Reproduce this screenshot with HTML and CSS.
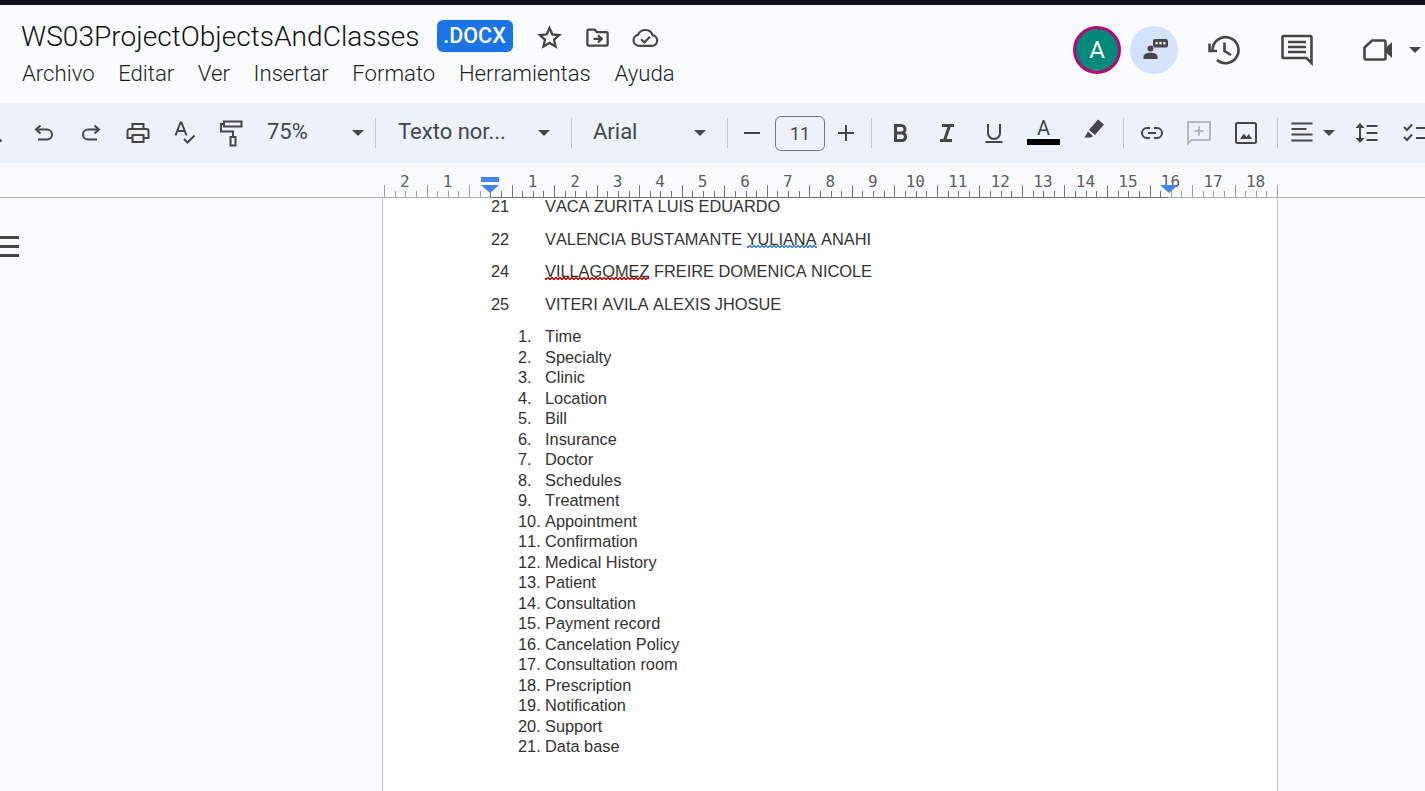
FILE: index.html
```html
<!DOCTYPE html>
<html lang="en">
<head>
    <meta charset="UTF-8">
    <title>WS03ProjectObjectsAndClasses</title>
    <link rel="stylesheet" href="styles.css">
</head>
<body>
    <div class="topline"></div>

    <header class="header">
        <div class="header-left">
            <div class="title-row">
                <span class="doc-title">WS03ProjectObjectsAndClasses</span>
                <span class="badge">.DOCX</span>
                <svg class="title-icon star" viewBox="0 0 24 24"><path class="ln" d="M12 3.600l2.500 5.600 6.100.6-4.600 4.100 1.400 6-5.400-3.100-5.400 3.100 1.400-6-4.600-4.100 6.100-.6z"/></svg>
                <svg class="title-icon folder" viewBox="0 0 24 24"><path class="ln" d="M3 18.200V6a1 1 0 0 1 1-1h5.500l2 2.200H20a1 1 0 0 1 1 1v10a1 1 0 0 1-1 1H4a1 1 0 0 1-1-1z"/><path class="ln" d="M8.500 13.200h7M12.500 10l3.200 3.200-3.200 3.200"/></svg>
                <svg class="title-icon cloud" viewBox="0 0 28 24"><path class="ln" d="M8 19.500a5 5 0 0 1-.8-9.900A7.200 7.200 0 0 1 20.600 10a4.800 4.800 0 0 1-.4 9.500z"/><path class="ln" d="M10 13.500l3 3 5-5.200"/></svg>
            </div>
            <nav class="menu">
                <span>Archivo</span>
                <span>Editar</span>
                <span>Ver</span>
                <span>Insertar</span>
                <span>Formato</span>
                <span>Herramientas</span>
                <span>Ayuda</span>
            </nav>
        </div>
        <div class="header-right">
            <div class="avatar">A</div>
            <div class="chat-btn">
                <svg viewBox="0 0 28 28" width="28" height="28"><circle cx="10.500" cy="12.500" r="3" fill="#444746"/><path d="M3.500 23v-2.500c0-2.500 3.500-3.800 7-3.800s7 1.300 7 3.800V23z" fill="#444746"/><rect x="13" y="3" width="15" height="8.500" rx="2" fill="#444746"/><rect x="15.500" y="6" width="2.200" height="2.400" fill="#fff"/><rect x="19.400" y="6" width="2.200" height="2.400" fill="#fff"/><rect x="23.300" y="6" width="2.200" height="2.400" fill="#fff"/></svg>
            </div>
            <svg class="head-icon history" viewBox="0 0 32 32"><path class="ln2" d="M4.500 16A13 13 0 1 1 9 26"/><path class="ln2" d="M1.500 9.500v7.500h7.500"/><path class="ln2" d="M16.500 8.500v8.500l6.500 4"/></svg>
            <svg class="head-icon comments" viewBox="0 0 32 32"><path class="ln2" d="M2.500 2h27a1 1 0 0 1 1 1v26l-5-5h-23a1 1 0 0 1-1-1V3a1 1 0 0 1 1-1z"/><path class="ln2" d="M7 8h18M7 13h18M7 18h18"/></svg>
            <svg class="head-icon meet" viewBox="0 0 32 32"><path class="ln2" d="M10 6.500h12a1.500 1.500 0 0 1 1.500 1.500v16a1.500 1.500 0 0 1-1.500 1.500H4a1.500 1.500 0 0 1-1.500-1.500V13.500z"/><path d="M24 13.500l6-5.500v16l-6-5.500z" fill="#444746"/></svg>
            <span class="caret meet-caret"></span>
        </div>
    </header>

    <div class="toolbar">
        <span class="tool search"><svg viewBox="0 0 24 24"><circle class="ln" cx="10" cy="10" r="6"/><path class="ln" d="M14.500 14.500l6 6"/></svg></span>
        <span class="tool"><svg viewBox="0 0 24 24"><path class="ln" d="M8.500 4.500l-4.500 4 4.500 4"/><path class="ln" d="M4 8.500h11a5 5 0 0 1 0 10H6"/></svg></span>
        <span class="tool"><svg viewBox="0 0 24 24"><path class="ln" d="M15.500 4.500l4.500 4-4.500 4"/><path class="ln" d="M20 8.500H9a5 5 0 0 0 0 10h9"/></svg></span>
        <span class="tool"><svg viewBox="0 0 24 24"><path class="ln" d="M6.500 8V3h11v5"/><path class="ln" d="M6.500 17H1.500v-7a2 2 0 0 1 2-2h17a2 2 0 0 1 2 2v7h-5"/><path class="ln" d="M6.500 14h11v7h-11z"/></svg></span>
        <span class="tool"><svg viewBox="0 0 24 24"><path class="ln" d="M2.500 14.500L7.500 1.500h1l5 13M4.500 10h7"/><path class="ln" d="M11 18l3.500 3.500 7-7"/></svg></span>
        <span class="tool"><svg class="tall" viewBox="0 0 24 27"><path class="ln" d="M4 1.500h17.500v5H4z"/><path class="ln" d="M4 4H1v7.500h12V16"/><path class="ln" d="M10.500 17h5v8.500h-5z"/></svg></span>
        <div class="select zoom-select"><span>75%</span><i class="caret"></i></div>
        <i class="sep"></i>
        <div class="select style-select"><span>Texto nor...</span><i class="caret"></i></div>
        <i class="sep"></i>
        <div class="select font-select"><span>Arial</span><i class="caret"></i></div>
        <i class="sep"></i>
        <span class="tool"><svg viewBox="0 0 24 24"><path class="ln" d="M4 12h16"/></svg></span>
        <span class="size-box">11</span>
        <span class="tool size-plus"><svg viewBox="0 0 24 24"><path class="ln" d="M4 12h16M12 4v16"/></svg></span>
        <i class="sep sep-format"></i>
        <span class="tool"><svg viewBox="0 0 24 24"><path class="ln3" d="M7.500 12h5.800a3.700 3.700 0 0 0 0-7.500H7.500v15h6.800a3.800 3.800 0 0 0 0-7.500"/></svg></span>
        <span class="tool"><svg viewBox="0 0 24 24"><path class="ln3" d="M7 4.500h12M5 19.500h12M14.500 4.500l-5 15"/></svg></span>
        <span class="tool"><svg viewBox="0 0 24 24"><path class="ln" d="M6 3v9a6 6 0 0 0 12 0V3M3.500 21h17"/></svg></span>
        <div class="color-tool">
            <span class="color-a">A</span>
            <i class="color-bar"></i>
        </div>
        <span class="tool"><svg viewBox="0 3 24 24"><path d="M16 1.500l6 5-9 10.500-6-5z" fill="#444746"/><path d="M6 13.500l5 4.500-2 1.500H2.500z" fill="#444746"/></svg></span>
        <i class="sep sep-insert"></i>
        <span class="tool"><svg viewBox="0 0 24 24"><path class="ln" d="M10 7H7a5 5 0 0 0 0 10h3M14 7h3a5 5 0 0 1 0 10h-3M8 12h8"/></svg></span>
        <span class="tool"><svg viewBox="0 0 24 24"><path class="ln muted" d="M1 1h22v18H4.500L1 22.500z"/><path class="ln muted" d="M12 5.500v9M7.500 10h9"/></svg></span>
        <span class="tool"><svg viewBox="0 0 24 24"><rect class="ln" x="2" y="2" width="20" height="20" rx="1.500"/><path d="M6 18l3.800-5.500 2.700 3.500 2.200-3 3.500 5z" fill="#444746"/></svg></span>
        <i class="sep sep-para"></i>
        <span class="tool align-btn"><svg viewBox="0 0 24 24"><path class="ln" d="M1.500 2.500h21M1.500 8h15M1.500 13.500h21M1.500 19.500h21"/></svg></span>
        <i class="caret align-caret"></i>
        <span class="tool"><svg viewBox="0 0 24 24"><path class="ln" d="M6 3v18"/><path d="M1.500 7L6 2l4.500 5zM1.500 17L6 22l4.500-5z" fill="#444746"/><path class="ln" d="M12.500 5h11M12.500 12h11M12.500 19h11"/></svg></span>
        <span class="tool check-tool"><svg viewBox="0 0 24 24"><path class="ln" d="M1 6l3 3 5-5.500M1 16l3 3 5-5.500M13 7h11M13 17h11"/></svg></span>
    </div>

    <div class="ruler">
        <svg class="ruler-svg" width="895" height="35" viewBox="0 0 895 35" id="rulerSvg"></svg>
        <i class="indent-bar"></i>
        <i class="marker marker-left"></i>
        <i class="marker marker-right"></i>
    </div>

    <main class="workspace">
        <div class="outline-btn"><i></i><i></i><i></i></div>
        <section class="page">
            <div class="rows">
                <div class="row"><span class="num">21</span><span>VACA ZURITA LUIS EDUARDO</span></div>
                <div class="row"><span class="num">22</span><span>VALENCIA BUSTAMANTE <span class="spell-blue">YULIANA</span> ANAHI</span></div>
                <div class="row"><span class="num">24</span><span><span class="spell-red">VILLAGOMEZ</span> FREIRE DOMENICA NICOLE</span></div>
                <div class="row"><span class="num">25</span><span>VITERI AVILA ALEXIS JHOSUE</span></div>
            </div>
            <ol class="classes">
                <li>Time</li>
                <li>Specialty</li>
                <li>Clinic</li>
                <li>Location</li>
                <li>Bill</li>
                <li>Insurance</li>
                <li>Doctor</li>
                <li>Schedules</li>
                <li>Treatment</li>
                <li>Appointment</li>
                <li>Confirmation</li>
                <li>Medical History</li>
                <li>Patient</li>
                <li>Consultation</li>
                <li>Payment record</li>
                <li>Cancelation Policy</li>
                <li>Consultation room</li>
                <li>Prescription</li>
                <li>Notification</li>
                <li>Support</li>
                <li>Data base</li>
            </ol>
        </section>
    </main>

    <script>
        // ruler ticks and numbers, 42.5px per cm, zero sits at x=490 on screen
        var svg = document.getElementById('rulerSvg');
        var originX = 384;
        var zero = 490 - originX;
        var cm = 42.53;
        var rightEnd = 1168 - originX;
        var out = '';
        var i;

        function tick(x, y1, color) {
            out += '<line x1="' + x + '" x2="' + x + '" y1="' + y1 + '" y2="34" stroke="' + color + '"/>';
        }

        for (i = 0; i <= 84; i++) {
            var x = Math.round(i * cm / 4) + 0.5;
            var inside = x >= zero && x <= rightEnd;
            tick(x, i % 4 === 0 ? 22 : 28, inside ? '#757575' : '#a0a0a0');
        }

        for (i = -2; i <= 18; i++) {
            if (i === 0) continue;
            out += '<text x="' + (zero + i * cm) + '" y="24">' + Math.abs(i) + '</text>';
        }
        svg.innerHTML = out;
    </script>
</body>
</html>
```

FILE: styles.css
```css
html, body {
    margin: 0;
    height: 100%;
    overflow: hidden;
}

body {
    background: #f9fbfd;
    font-family: Roboto, "Liberation Sans", sans-serif;
    color: #1f1f1f;
    display: flex;
    flex-direction: column;
}

svg {
    display: block;
}

.ln, .ln2, .ln3 {
    fill: none;
    stroke: #444746;
    stroke-width: 2;
}

.ln2 {
    stroke-width: 2.600;
}

.ln3 {
    stroke-width: 3;
}

.ln.muted {
    stroke: #b5b8bd;
}

.topline {
    height: 5px;
    background: #0f0f17;
    flex: none;
}

/* header */
.header {
    height: 98px;
    flex: none;
    display: flex;
    justify-content: space-between;
}

.header-left {
    padding: 15px 0 0 21px;
}

.title-row {
    display: flex;
    align-items: center;
    height: 32px;
}

.doc-title {
    font-size: 28.100px;
    font-weight: 300;
    color: #111;
}

.badge {
    margin-left: 17px;
    width: 76px;
    height: 32px;
    line-height: 32px;
    text-align: center;
    border-radius: 6px;
    background: #1a73e8;
    color: #fff;
    font-size: 21.500px;
    font-weight: 500;
}

.title-icon {
    width: 27px;
    height: 27px;
    margin-top: 3px;
}

.star {
    margin-left: 23px;
}

.folder {
    margin-left: 21px;
}

.cloud {
    width: 31px;
    margin-left: 19px;
}

.menu {
    display: flex;
    gap: 23.600px;
    margin: 8px 0 0 1px;
    font-size: 22.150px;
    font-weight: 300;
    line-height: 26px;
    color: #1f1f1f;
}

.header-right {
    display: flex;
    align-items: center;
    height: 48px;
    padding: 21px 4px 0 0;
}

.avatar {
    width: 48px;
    height: 48px;
    box-sizing: border-box;
    border: 3px solid #b80672;
    border-radius: 50%;
    background: #00897b;
    color: #fff;
    font-size: 24px;
    line-height: 42px;
    text-align: center;
}

.chat-btn {
    width: 48px;
    height: 48px;
    margin-left: 9px;
    border-radius: 50%;
    background: #d3e3fd;
    display: flex;
    align-items: center;
    justify-content: center;
}

.head-icon {
    width: 32px;
    height: 32px;
}

.history {
    margin-left: 30px;
}

.comments {
    margin-left: 41px;
}

.meet {
    margin-left: 49px;
}

.caret {
    display: block;
    width: 0;
    height: 0;
    border-left: 6px solid transparent;
    border-right: 6px solid transparent;
    border-top: 6px solid #444746;
    flex: none;
}

.meet-caret {
    margin-left: 15px;
}

/* toolbar */
.toolbar {
    height: 60px;
    flex: none;
    margin-left: -27px;
    display: flex;
    align-items: center;
    background: #edf2fa;
    white-space: nowrap;
}

.tool {
    width: 47px;
    flex: none;
    display: flex;
    justify-content: center;
}

.tool svg {
    width: 24px;
    height: 24px;
    overflow: visible;
}

.tool svg.tall {
    height: 27px;
}

.search svg {
    margin-right: 8px;
}

.select {
    display: flex;
    align-items: center;
    justify-content: space-between;
    flex: none;
    font-size: 22px;
    line-height: 26px;
    color: #444746;
    box-sizing: border-box;
    padding-bottom: 2px;
}

.select .caret {
    margin-top: 2px;
}

.zoom-select {
    width: 120px;
    padding-left: 12px;
    padding-right: 11px;
}

.style-select {
    width: 195px;
    padding-left: 22px;
    padding-right: 21px;
}

.font-select {
    width: 155px;
    padding-left: 21px;
    padding-right: 21px;
}

.sep {
    width: 1px;
    height: 30px;
    background: #c7c7c7;
    flex: none;
}

.sep-format {
    margin: 0 4px;
}

.sep-insert {
    margin: 0 4.500px 0 5.500px;
}

.sep-para {
    margin-left: 7.500px;
}

.size-box {
    width: 48px;
    height: 33px;
    line-height: 33px;
    border: 1px solid #747775;
    border-radius: 6px;
    text-align: center;
    font-size: 18px;
    color: #444746;
    flex: none;
}

.size-plus {
    width: 42px;
}

.color-tool {
    width: 53px;
    height: 28px;
    margin-bottom: 5px;
    flex: none;
    position: relative;
    text-align: center;
}

.color-a {
    font-size: 20px;
    line-height: 22px;
    color: #444746;
    display: block;
}

.color-bar {
    position: absolute;
    left: 9.500px;
    bottom: 0;
    width: 33px;
    height: 6px;
    background: #000;
}

.align-btn {
    width: 48px;
}

.align-caret {
    margin: 0 7.500px 0 -3px;
}

.check-tool {
    margin-left: 2px;
}

/* ruler */
.ruler {
    height: 35px;
    flex: none;
    box-sizing: border-box;
    border-bottom: 1px solid #b4b4b4;
    position: relative;
}

.ruler-svg {
    position: absolute;
    left: 384px;
    top: 0;
    overflow: visible;
}

.ruler-svg text {
    font-family: "DejaVu Sans Mono", monospace;
    font-size: 16px;
    fill: #5f5f5f;
    text-anchor: middle;
}

.indent-bar {
    position: absolute;
    left: 490px;
    width: 678px;
    bottom: -1px;
    height: 1px;
    background: #757575;
}

.marker {
    position: absolute;
    top: 22px;
    width: 0;
    height: 0;
    border-left: 9px solid transparent;
    border-right: 9px solid transparent;
    border-top: 8px solid #4285f4;
}

.marker-left {
    left: 481px;
}

.marker-left::before {
    content: "";
    position: absolute;
    left: -9px;
    top: -16px;
    width: 18px;
    height: 5px;
    background: #4285f4;
}

.marker-right {
    left: 1160px;
}

/* page */
.workspace {
    flex: 1;
    position: relative;
    display: flex;
    justify-content: flex-start;
    min-height: 0;
}

.outline-btn {
    position: absolute;
    left: 0;
    top: 38px;
    width: 19px;
}

.outline-btn i {
    display: block;
    height: 3px;
    margin-bottom: 6px;
    background: #444746;
}

.page {
    margin-left: 382px;
    width: 894px;
    background: #fff;
    border-left: 1px solid #c7c7c7;
    border-right: 1px solid #c7c7c7;
    font-family: "Liberation Sans", Arial, sans-serif;
    font-size: 16.350px;
    font-kerning: none;
    color: #333;
    overflow: hidden;
}

.rows {
    padding-left: 108px;
    margin-top: -8px;
}

.row {
    display: flex;
    height: 32.500px;
    line-height: 32px;
}

.num {
    width: 54px;
}

/* tight zigzag, text-decoration wavy comes out too wide at this size */
.spell-blue, .spell-red {
    background-image:
        linear-gradient(135deg, transparent 35%, var(--squiggle) 35%, var(--squiggle) 65%, transparent 65%),
        linear-gradient(45deg, transparent 35%, var(--squiggle) 35%, var(--squiggle) 65%, transparent 65%);
    background-size: 4px 4px, 4px 4px;
    background-position: 0 100%, 2px 100%;
    background-repeat: repeat-x;
    background-clip: content-box;
    background-size: 4px 3px;
}

.spell-blue {
    --squiggle: #4285f4;
}

.spell-red {
    --squiggle: #e00000;
}

.classes {
    margin: 6px 0 0;
    padding-left: 135px;
    line-height: 20.500px;
    list-style: none;
    counter-reset: item;
}

.classes li {
    counter-increment: item;
}

.classes li::before {
    content: counter(item) ".";
    display: inline-block;
    width: 27px;
}
```
